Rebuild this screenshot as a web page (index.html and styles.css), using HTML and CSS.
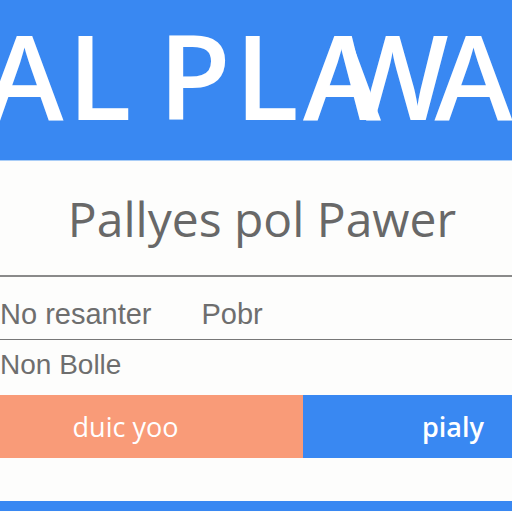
FILE: index.html
```html
<!DOCTYPE html>
<html>
<head>
<meta charset="utf-8">
<link rel="stylesheet" href="styles.css">
</head>
<body>
<div class="page">
  <header class="hero"><span class="hero-text">AL PL<span class="merge">A</span><span class="merge-w">W</span>A</span></header>
  <section class="title"><h1>Pallyes pol Pawer</h1></section>
  <div class="rule thick"></div>
  <div class="row row-one">
    <span class="label">No resanter</span>
    <span class="value">Pobr</span>
  </div>
  <div class="rule thin"></div>
  <div class="row row-two">
    <span class="label">Non Bolle</span>
  </div>
  <div class="actions">
    <button class="btn btn-orange">duic yoo</button>
    <button class="btn btn-blue">pialy</button>
  </div>
  <div class="spacer"></div>
  <footer class="foot"></footer>
</div>
</body>
</html>
```
FILE: styles.css
```css
html, body {
  margin: 0;
  padding: 0;
  background: #fdfdfc;
}
.page {
  width: 512px;
  height: 512px;
  overflow: hidden;
  display: flex;
  flex-direction: column;
  font-family: "Open Sans", "DejaVu Sans", sans-serif;
}
.hero {
  height: 161px;
  flex: none;
  background: #3988f2;
  border-bottom: 1px solid #a9cdf7;
  display: flex;
  justify-content: center;
  align-items: center;
  overflow: hidden;
  padding-bottom: 10px;
  box-sizing: border-box;
}
.hero-text {
  color: #ffffff;
  font-family: "Open Sans", sans-serif;
  font-weight: 600;
  font-size: 118px;
  line-height: 1;
  white-space: nowrap;
  letter-spacing: 4px;
  word-spacing: -12px;
  margin-left: -10px;
}
.merge {
  letter-spacing: -44px;
}
.merge-w {
  letter-spacing: -14px;
}
.title {
  height: 114px;
  flex: none;
  display: flex;
  justify-content: center;
  align-items: center;
  padding-left: 12px;
  box-sizing: border-box;
}
.title h1 {
  margin: 0;
  font-family: "Open Sans", sans-serif;
  font-weight: 400;
  font-size: 48px;
  color: #686868;
  letter-spacing: 0;
}
.rule {
  flex: none;
  width: 100%;
}
.rule.thick {
  height: 2px;
  background: #8a8a8a;
}
.rule.thin {
  height: 1px;
  background: #777777;
}
.row {
  flex: none;
  display: flex;
  align-items: center;
  font-family: "Liberation Sans", sans-serif;
  color: #6e6e6e;
}
.row-one {
  height: 62px;
  font-size: 29px;
  padding-top: 12px;
  box-sizing: border-box;
}
.row-one .value {
  margin-left: 50px;
}
.row-two {
  height: 55px;
  font-size: 28px;
  box-sizing: border-box;
  padding-bottom: 6px;
}
.actions {
  height: 63px;
  flex: none;
  display: flex;
}
.btn {
  border: none;
  margin: 0;
  padding: 0;
  color: #ffffff;
  font-family: "Open Sans", sans-serif;
  font-size: 27px;
  font-weight: 400;
}
.btn-orange {
  width: 303px;
  background: #f99b78;
  text-align: center;
  padding-right: 52px;
}
.btn-blue {
  flex: 1;
  background: #3988f2;
  text-align: right;
  padding-right: 28px;
  font-weight: 600;
}
.spacer {
  height: 43px;
  flex: none;
}
.foot {
  height: 10px;
  flex: none;
  background: #3988f2;
}
```
